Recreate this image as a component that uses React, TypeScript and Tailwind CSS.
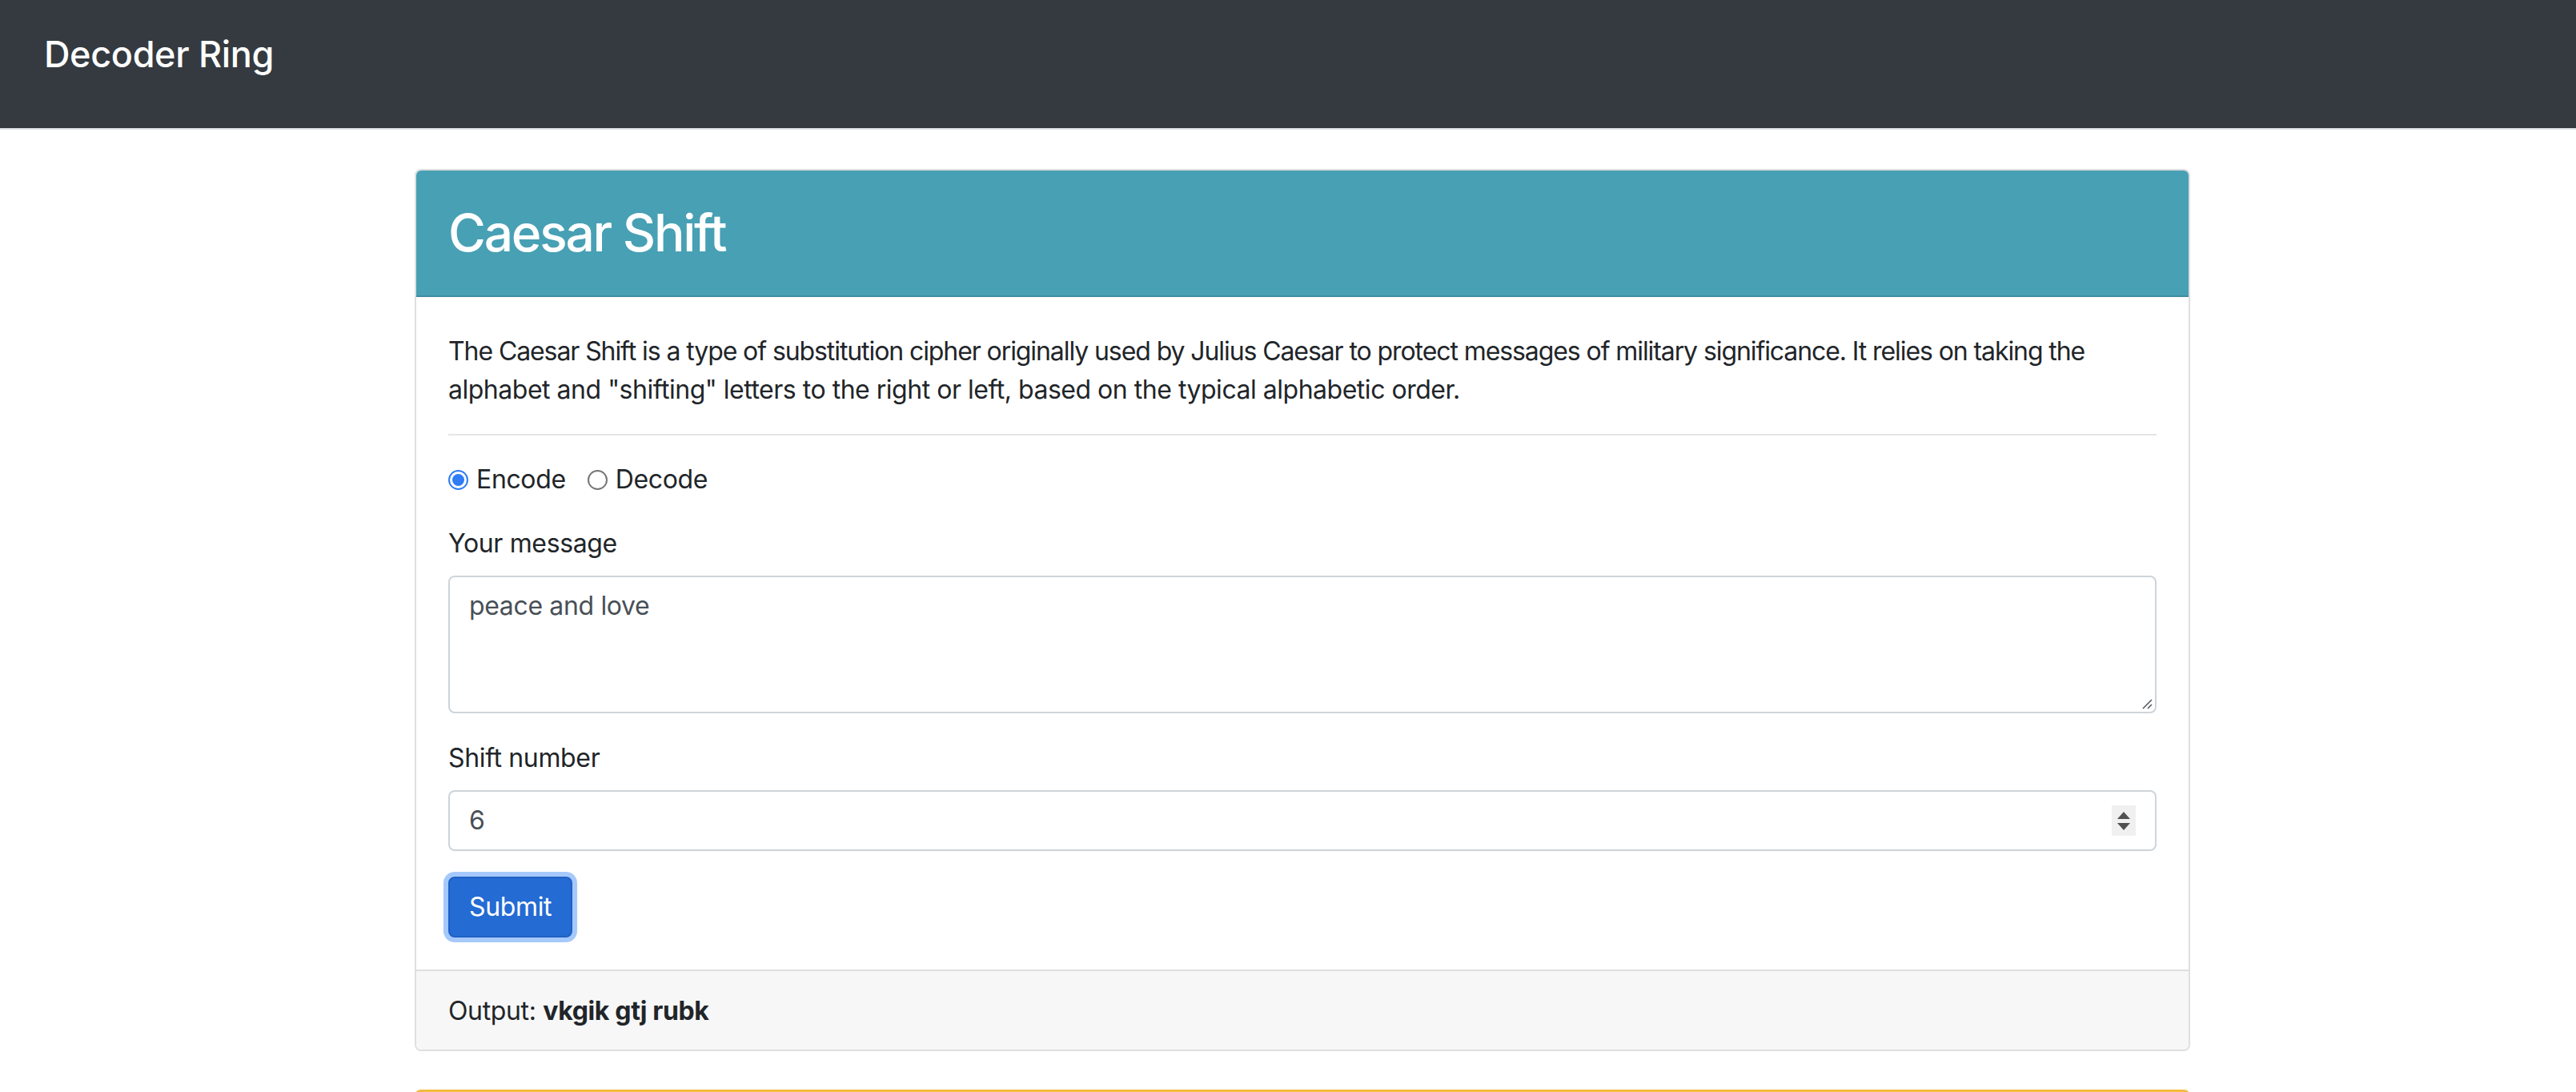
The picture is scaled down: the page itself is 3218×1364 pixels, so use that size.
import React from 'react'

const font = { fontFamily: 'Inter, "Liberation Sans", Arial, sans-serif' }

function Radio({ checked, label }: { checked?: boolean; label: string }) {
  return (
    <label className="flex items-center gap-[10px]">
      {checked ? (
        <span className="w-[25px] h-[25px] rounded-full border-[2px] border-[#2f7cf6] flex items-center justify-center">
          <span className="w-[15px] h-[15px] rounded-full bg-[#2f7cf6]" />
        </span>
      ) : (
        <span className="w-[25px] h-[25px] rounded-full border-[2px] border-[#767676] bg-white" />
      )}
      <span>{label}</span>
    </label>
  )
}

export default function App() {
  return (
    <div className="min-h-screen bg-white text-[#212529] tracking-[-0.022em]" style={font}>
      {/* Navbar */}
      <nav className="h-[162px] bg-[#343a40] border-b-2 border-[#dee2e6] flex items-center px-[55px] pb-[26px]">
        <span className="text-[45px] font-medium text-white leading-none">Decoder Ring</span>
      </nav>

      <main className="pt-[49px]">
        {/* Caesar Shift card */}
        <section className="ml-[518px] w-[2218px] border-2 border-[#dfdfdf] rounded-[8px] overflow-hidden">
          <header className="h-[158px] bg-[#48a0b4] border-b-2 border-[#3f8d9f] px-[40px] flex items-center">
            <h2 className="text-[64px] font-medium leading-[1.2] text-white tracking-[-0.035em]">Caesar Shift</h2>
          </header>

          <div className="px-[40px] pt-[44px] pb-[40px] text-[32px] leading-[48px]">
            <p>
              <span className="block whitespace-nowrap tracking-[-0.034em]">
                The Caesar Shift is a type of substitution cipher originally used by Julius Caesar to protect messages of military significance. It relies on taking the
              </span>
              <span className="block tracking-[-0.015em]">
                alphabet and "shifting" letters to the right or left, based on the typical alphabetic order.
              </span>
            </p>
            <hr className="mt-[31px] mb-[31px] border-t-2 border-[#e6e6e6]" />

            <div className="flex items-center gap-[27px]">
              <Radio checked label="Encode" />
              <Radio label="Decode" />
            </div>

            <div className="mt-[32px]">
              <div className="mb-[16px]">Your message</div>
              <div className="relative h-[172px] border-2 border-[#ced4da] rounded-[8px] px-[24px] py-[12px] text-[#495057]">
                peace and love
                <svg className="absolute right-[3px] bottom-[3px]" width="14" height="14" viewBox="0 0 14 14">
                  <path d="M13 2 L2 13 M13 8 L8 13" stroke="#555" strokeWidth="1.5" />
                </svg>
              </div>
            </div>

            <div className="mt-[32px]">
              <div className="mb-[16px]">Shift number</div>
              <div className="h-[76px] border-2 border-[#ced4da] rounded-[8px] pl-[24px] pr-[24px] flex items-center justify-between text-[#495057]">
                <span>6</span>
                <span className="w-[30px] h-[38px] bg-[#f0f0f0] flex flex-col items-center justify-center gap-[5px]">
                  <svg width="16" height="9" viewBox="0 0 16 9">
                    <path d="M8 0 L16 9 L0 9 Z" fill="#505050" />
                  </svg>
                  <svg width="16" height="9" viewBox="0 0 16 9">
                    <path d="M0 0 L16 0 L8 9 Z" fill="#505050" />
                  </svg>
                </span>
              </div>
            </div>

            <button className="mt-[32px] h-[76px] px-[24px] rounded-[8px] border-2 border-[#1f60c4] bg-[#246bd3] text-white shadow-[0_0_0_6px_#a6c9fb]">
              Submit
            </button>
          </div>

          <footer className="bg-[#f7f7f7] border-t-2 border-[#dfdfdf] px-[40px] pt-[26px] pb-[24px] text-[32px] leading-[48px]">
            Output: <strong className="font-bold">vkgik gtj rubk</strong>
          </footer>
        </section>

        {/* Next card (cut off) */}
        <section className="ml-[518px] w-[2218px] mt-[48px] h-[60px] border-2 border-[#f0b93a] rounded-t-[8px] bg-[#f7c244]" />
      </main>
    </div>
  )
}
